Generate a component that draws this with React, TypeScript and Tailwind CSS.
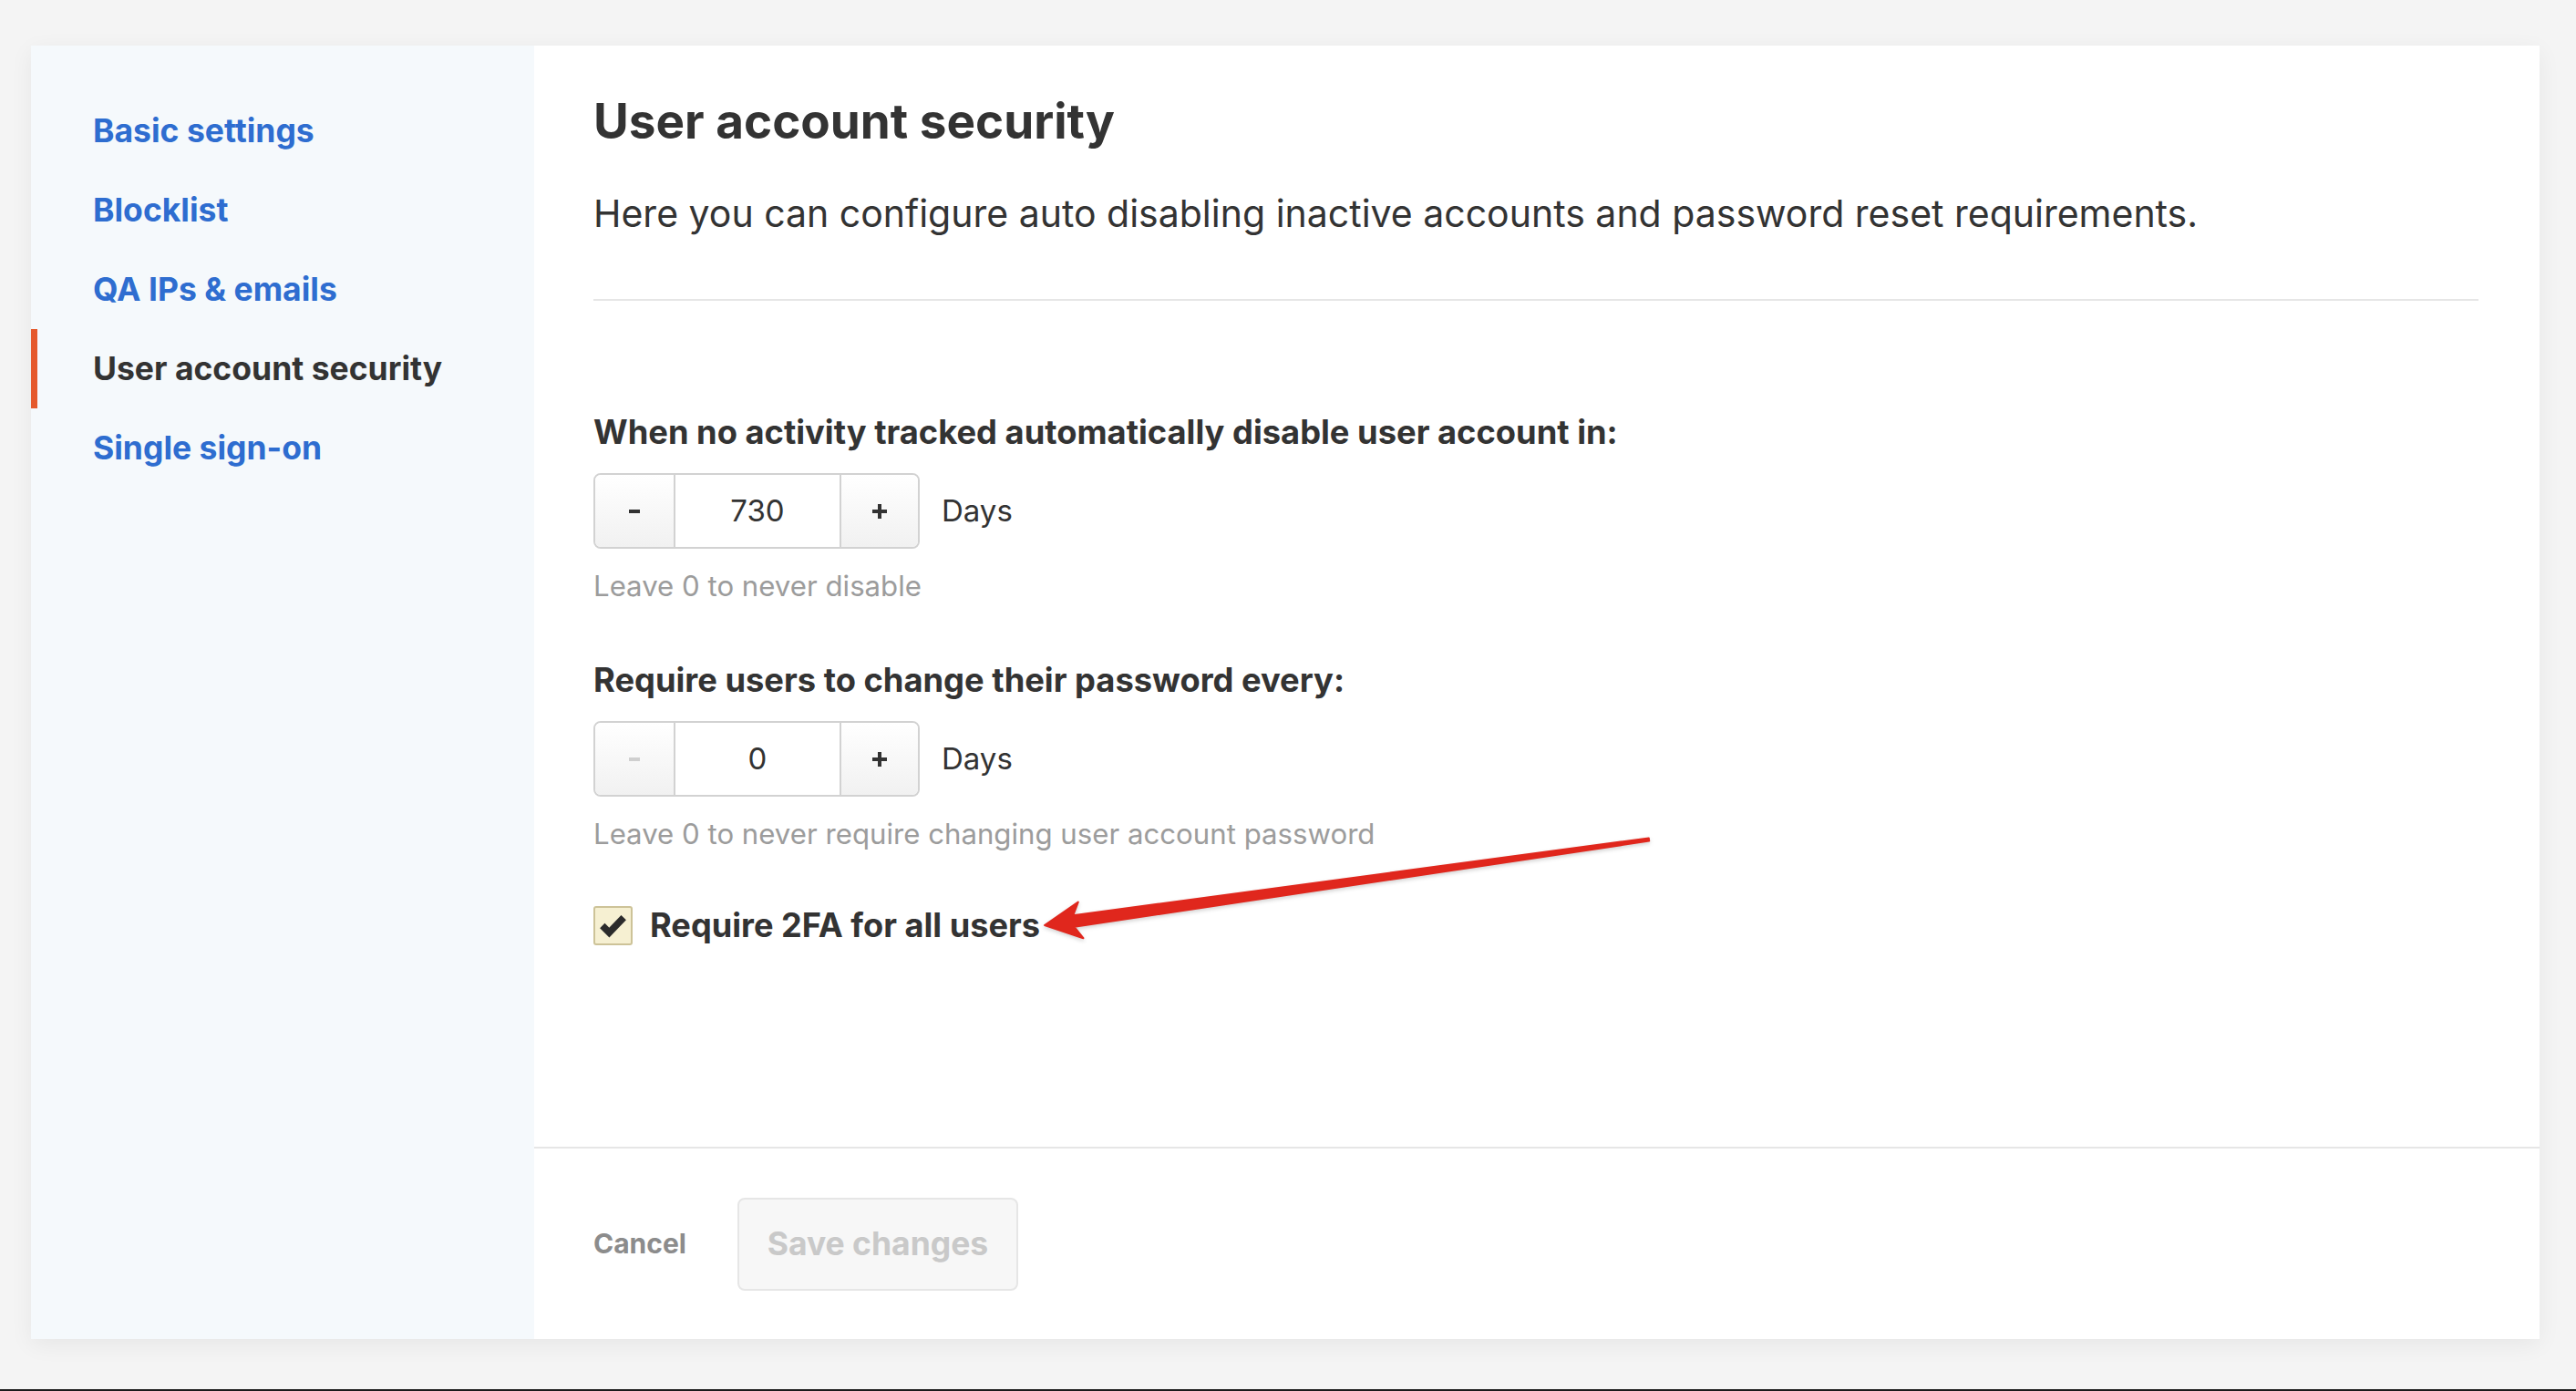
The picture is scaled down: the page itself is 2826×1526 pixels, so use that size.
import { useState } from 'react';

const NAV_ITEMS = [
  { id: 'basic', label: 'Basic settings' },
  { id: 'blocklist', label: 'Blocklist' },
  { id: 'qa', label: 'QA IPs & emails' },
  { id: 'security', label: 'User account security' },
  { id: 'sso', label: 'Single sign-on' },
];

function Stepper({ value, onChange }: { value: number; onChange: (v: number) => void }) {
  const canDecrease = value > 0;
  return (
    <div className="flex items-center gap-[24px]">
      <div className="flex h-[83px] rounded-[8px] border-2 border-[#d2d2d2] overflow-hidden">
        <button
          onClick={() => canDecrease && onChange(value - 1)}
          className="w-[86px] flex items-center justify-center bg-gradient-to-b from-white to-[#f1f1f1]"
        >
          <span className={`block w-[12px] h-[4px] ${canDecrease ? 'bg-[#333]' : 'bg-[#cfcfcf]'}`} />
        </button>
        <div className="w-[184px] flex items-center justify-center bg-white border-x-2 border-[#d2d2d2] text-[33px] text-[#333]">
          {value}
        </div>
        <button
          onClick={() => onChange(value + 1)}
          className="w-[84px] flex items-center justify-center bg-gradient-to-b from-white to-[#f1f1f1]"
        >
          <span className="relative block w-[16px] h-[16px]">
            <span className="absolute left-0 top-[6px] w-[16px] h-[4px] bg-[#333]" />
            <span className="absolute top-0 left-[6px] w-[4px] h-[16px] bg-[#333]" />
          </span>
        </button>
      </div>
      <span className="text-[33px] text-[#333]">Days</span>
    </div>
  );
}

export default function App() {
  const [active, setActive] = useState('security');
  const [inactiveDays, setInactiveDays] = useState(730);
  const [passwordDays, setPasswordDays] = useState(0);
  const [require2fa, setRequire2fa] = useState(true);

  return (
    <div className="relative w-[2826px] h-[1526px] bg-[#f4f4f4] flex flex-col font-['Inter','Open_Sans',sans-serif] text-[#333]">
      <div className="pt-[50px] pl-[34px] pr-[40px]">
        <div className="flex h-[1419px] bg-white shadow-[0_6px_24px_rgba(0,0,0,0.06)]">
          {/* sidebar */}
          <nav className="w-[552px] bg-[#f5f9fc] pt-[50px]">
            {NAV_ITEMS.map(item => (
              <button
                key={item.id}
                onClick={() => setActive(item.id)}
                className={`w-full h-[87px] flex items-center pl-[61px] border-l-[7px] text-left text-[35.5px] font-bold ${
                  active === item.id ? 'border-[#e5592c] text-[#333]' : 'border-transparent text-[#2e6dd0]'
                }`}
              >
                {item.label}
              </button>
            ))}
          </nav>

          {/* main form */}
          <div className="flex-1 flex flex-col">
            <div className="flex-1 pl-[65px] pr-[67px] pt-[53px]">
              <h1 className="text-[53px] leading-[60px] font-bold">User account security</h1>
              <p className="mt-[47px] text-[41px] leading-[48px]">
                Here you can configure auto disabling inactive accounts and password reset requirements.
              </p>
              <div className="mt-[70px] h-[2px] bg-[#e6e6e6]" />

              <h3 className="mt-[122px] text-[36.3px] leading-[44px] font-bold">
                When no activity tracked automatically disable user account in:
              </h3>
              <div className="mt-[23px]">
                <Stepper value={inactiveDays} onChange={setInactiveDays} />
              </div>
              <p className="mt-[21px] text-[31.2px] leading-[40px] text-[#9c9c9c]">Leave 0 to never disable</p>

              <h3 className="mt-[61px] text-[36.3px] leading-[44px] font-bold">Require users to change their password every:</h3>
              <div className="mt-[23px]">
                <Stepper value={passwordDays} onChange={setPasswordDays} />
              </div>
              <p className="mt-[21px] text-[31.2px] leading-[40px] text-[#9c9c9c]">
                Leave 0 to never require changing user account password
              </p>

              <label className="mt-[58px] flex items-center gap-[19px] cursor-pointer">
                <button
                  onClick={() => setRequire2fa(!require2fa)}
                  className="w-[43px] h-[43px] flex items-center justify-center rounded-[3px] border-2 border-[#cdc398] bg-[#f6f0d2]"
                >
                  {require2fa && (
                    <svg viewBox="0 0 24 24" className="w-[33px] h-[33px]">
                      <path d="M3.5 12 L9 17.5 L20.5 5.5" fill="none" stroke="#2b2b2b" strokeWidth="5.5" strokeLinejoin="miter" />
                    </svg>
                  )}
                </button>
                <span className="text-[36.2px] leading-[44px] font-bold">Require 2FA for all users</span>
              </label>
            </div>

            <div className="h-[211px] border-t-2 border-[#e6e6e6] flex items-center pl-[65px] gap-[56px]">
              <button className="text-[30px] font-bold text-[#8c8c8c]">Cancel</button>
              <button
                disabled
                className="w-[308px] h-[102px] rounded-[8px] border-2 border-[#e6e6e6] bg-[#f7f7f7] text-[35.5px] font-bold text-[#c9c9c9]"
              >
                Save changes
              </button>
            </div>
          </div>
        </div>
      </div>
      <div className="flex-1" />
      <div className="h-[2px] bg-[#1c1c1c]" />

      {/* red callout arrow */}
      <svg
        className="absolute inset-0 pointer-events-none"
        width="2826"
        height="1526"
        viewBox="0 0 2826 1526"
        style={{ filter: 'drop-shadow(0 2px 2px rgba(0,0,0,0.18))' }}
      >
        <polygon
          points="1146,1015 1182.8,989.6 1177.2,1004.3 1808.8,919.4 1809.2,922.6 1178.6,1016.8 1188.4,1029.2"
          fill="#e0271d"
          strokeLinejoin="round"
          stroke="#e0271d"
          strokeWidth="2"
        />
      </svg>
    </div>
  );
}
